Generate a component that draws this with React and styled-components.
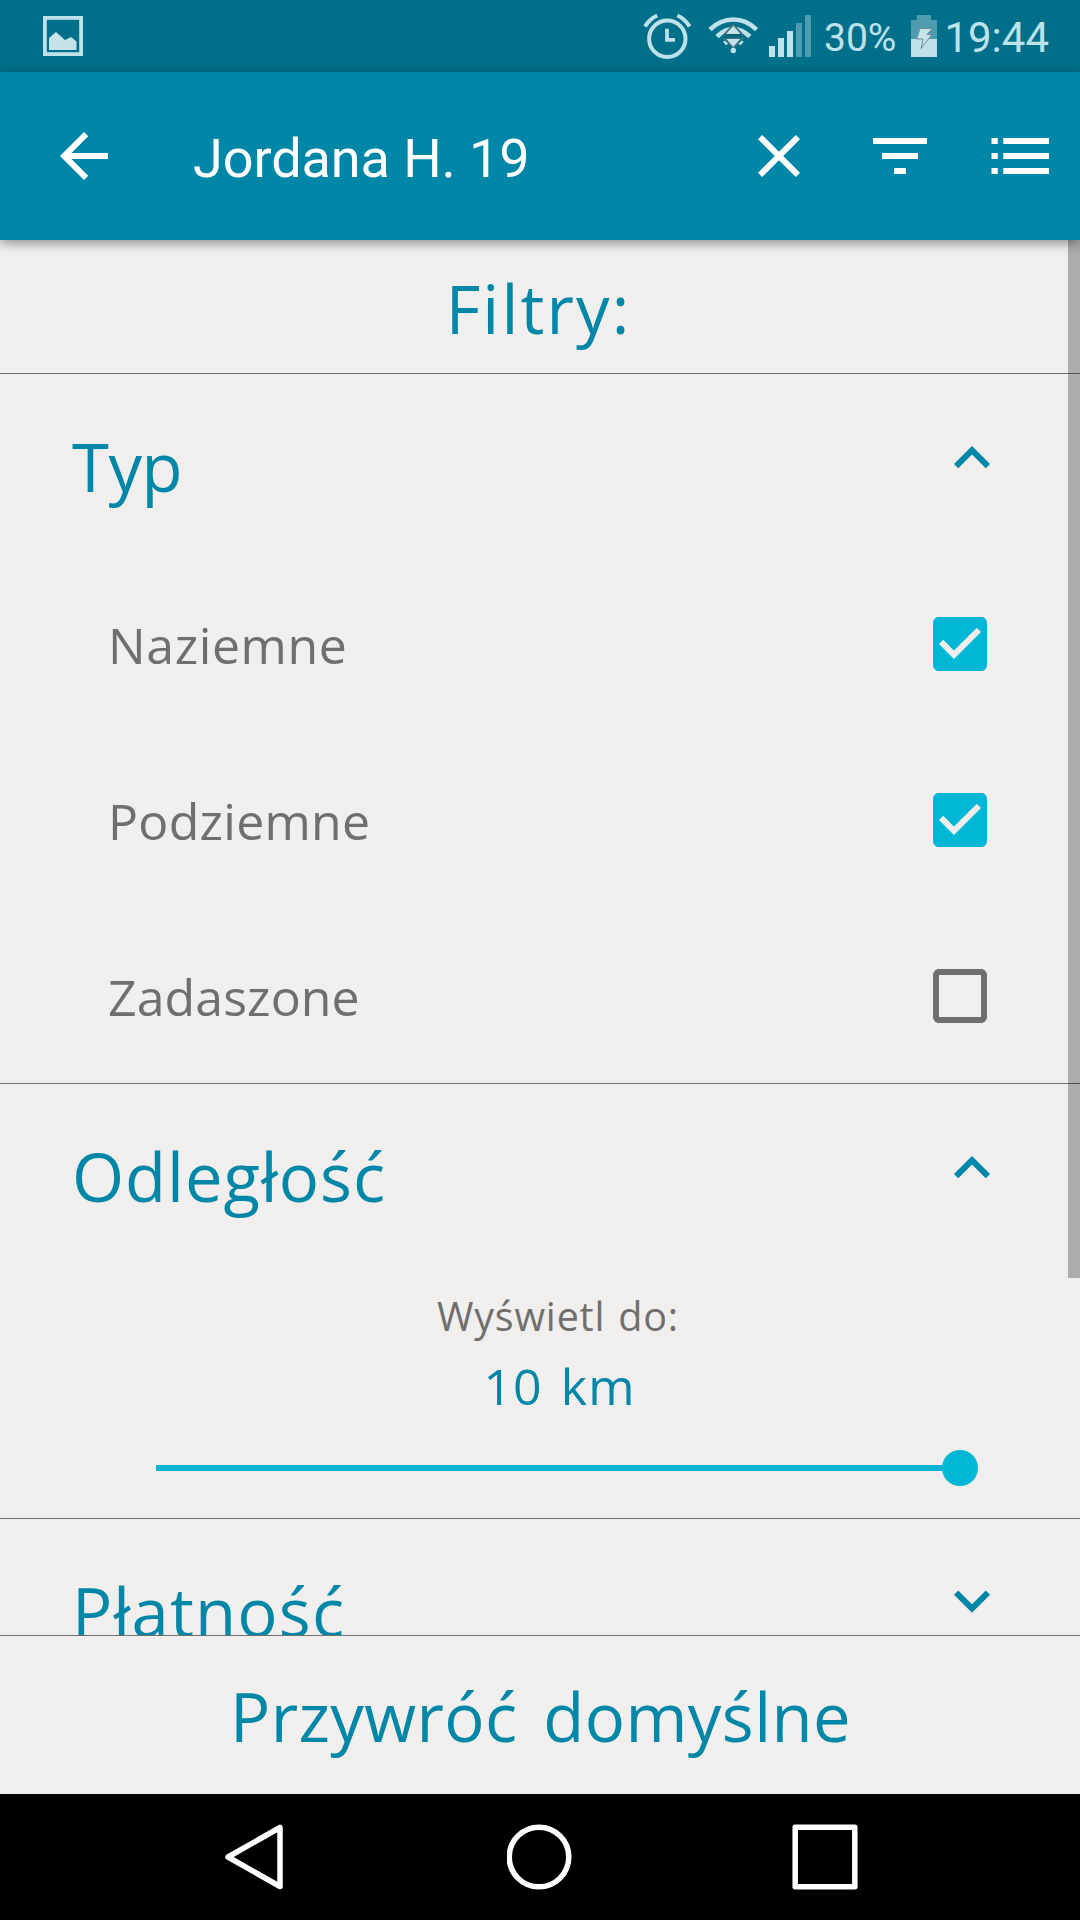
import React, { useState } from 'react'
import styled, { createGlobalStyle } from 'styled-components'

const GlobalStyle = createGlobalStyle`
    :root{
        --primary: #0086a6;
        --primaryDark: #00708a;
        --accent: #00b8d6;
        --text: #706f6d;
        --bg: #f0efed;
        --status: #bfe1ea;
    }
    *{
        box-sizing: border-box;
    }
    body{
        margin: 0;
        background-color: var(--bg);
    }
    svg{
        display: block;
        flex: none;
    }
`

const Screen = styled.div`
    width: 1080px;
    height: 1920px;
    display: flex;
    flex-direction: column;
    overflow: hidden;
    background-color: var(--bg);
    font-family: 'Open Sans', 'Noto Sans', sans-serif;
    white-space: nowrap;
`

const StatusBar = styled.div`
    flex: none;
    height: 72px;
    padding: 0 31px 0 43px;
    display: flex;
    align-items: center;
    background-color: var(--primaryDark);
    color: var(--status);
    font-family: Roboto, sans-serif;
`

const StatusIcons = styled.div`
    margin-left: auto;
    display: flex;
    align-items: center;
    .wifi{
        margin: 0 11px 0 17px;
    }
    .battery{
        margin: 0 7px 0 15px;
    }
`

const StatusText = styled.span`
    font-size: ${props => props.$size}px;
    line-height: 48px;
    padding-top: 3px;
`

const Percent = styled(StatusText)`
    margin-left: 13px;
`

const AppBar = styled.header`
    flex: none;
    height: 168px;
    padding: 0 31px 0 48px;
    display: flex;
    align-items: center;
    background-color: var(--primary);
    color: white;
    box-shadow: 0 3px 11px rgba(0,0,0, .42);
    z-index: 1;
`

const Title = styled.h1`
    flex: 1;
    margin: 0 0 0 73px;
    padding-top: 5px;
    font: 400 54px/64px Roboto, sans-serif;
    letter-spacing: -.08px;
`

const Actions = styled.div`
    display: flex;
    align-items: center;
    .filter{
        margin: 0 64px 0 73px;
    }
`

const Scroll = styled.main`
    flex: 1;
    min-height: 0;
    overflow: hidden;
    position: relative;
`

const ScrollThumb = styled.div`
    position: absolute;
    top: 0;
    right: 0;
    width: 12px;
    height: 1038px;
    background-color: rgba(0,0,0, .28);
`

const Heading = styled.h2`
    margin: 0;
    height: 134px;
    padding: 3px 3px 0 0;
    display: flex;
    align-items: center;
    justify-content: center;
    border-bottom: 1px solid var(--text);
    color: var(--primary);
    font-size: 67px;
    font-weight: 400;
    letter-spacing: 2.13px;
`

const SectionStyled = styled.section`
    border-bottom: 1px solid var(--text);
`

const SectionHead = styled.div`
    height: 182px;
    padding: 0 72px;
    display: flex;
    align-items: center;
    justify-content: space-between;
    color: var(--primary);
    svg{
        margin-bottom: 14px;
    }
`

const SectionTitle = styled.h3`
    margin: 0;
    padding-top: 2px;
    font-size: 67px;
    font-weight: 400;
    letter-spacing: ${props => props.$spacing}px;
`

const Row = styled.label`
    height: ${props => props.$last ? 175 : 176}px;
    padding: 0 84px 0 108px;
    display: flex;
    align-items: center;
    justify-content: space-between;
    color: var(--text);
    font-size: 50px;
    letter-spacing: ${props => props.$spacing}px;
    span{
        padding-top: 2px;
    }
`

const Distance = styled.div`
    height: 252px;
    padding: 25px 120px 0 156px;
    display: flex;
    flex-direction: column;
`

const DistanceLabel = styled.span`
    text-align: center;
    color: var(--text);
    font-size: 39.5px;
    line-height: 50px;
    letter-spacing: .8px;
    word-spacing: 2px;
`

const DistanceValue = styled.span`
    margin-top: 10px;
    padding-left: 3px;
    text-align: center;
    color: var(--primary);
    font-size: 50px;
    line-height: 70px;
    letter-spacing: 1.1px;
    word-spacing: 4px;
`

const Slider = styled.div`
    margin: 29px -18px 0 0;
    height: 36px;
    display: flex;
    align-items: center;
`

const Track = styled.div`
    flex: 1;
    height: 6px;
    margin-right: -4px;
    background-color: #0cb3d1;
`

const Thumb = styled.div`
    width: 36px;
    height: 36px;
    border-radius: 50%;
    background-color: var(--accent);
`

const Footer = styled.footer`
    flex: none;
    height: 159px;
    padding: 2px 0 0 1px;
    display: flex;
    align-items: center;
    justify-content: center;
    border-top: 1px solid var(--text);
    color: var(--primary);
    font-size: 67px;
    letter-spacing: .4px;
    word-spacing: 8px;
`

const NavBar = styled.nav`
    flex: none;
    height: 126px;
    padding: 0 222px 0 221px;
    display: flex;
    align-items: center;
    justify-content: space-between;
    background-color: black;
`

const Icon = ({ d, color = 'currentColor' }) => (
    <svg width="72" height="72" viewBox="0 0 24 24" fill={color}>
        <path d={d} />
    </svg>
)

const BACK = 'M20 11H7.83l5.59-5.59L12 4l-8 8 8 8 1.41-1.41L7.83 13H20v-2z'
const UP = 'M12 8l-6 6 1.41 1.41L12 10.83l4.59 4.58L18 14z'
const DOWN = 'M7.41 7.84L12 12.42l4.59-4.58L18 9.25l-6 6-6-6z'
const CHECKED = 'M19 3H5c-1.11 0-2 .9-2 2v14c0 1.1.89 2 2 2h14c1.11 0 2-.9 2-2V5c0-1.1-.89-2-2-2zm-9 14l-5-5 1.41-1.41L10 14.17l7.59-7.59L19 8l-9 9z'
const UNCHECKED = 'M19 5v14H5V5h14m0-2H5c-1.1 0-2 .9-2 2v14c0 1.1.9 2 2 2h14c1.1 0 2-.9 2-2V5c0-1.1-.9-2-2-2z'

const PictureIcon = () => (
    <svg width="40" height="40" viewBox="0 0 40 40">
        <rect x="1.9" y="1.9" width="36.2" height="36.2" fill="none" stroke="currentColor" strokeWidth="3.8" />
        <path d="M6 22l7-6 9 8 6-3 5.5 4.5V34H6z" fill="#c8e2e9" />
    </svg>
)

const AlarmIcon = () => (
    <svg width="48" height="46" viewBox="0 0 48 46" fill="none" stroke="currentColor" strokeWidth="4">
        <circle cx="24.3" cy="25.7" r="18.2" />
        <path d="M24 15.7v11.2h8" strokeWidth="3.7" />
        <path d="M2 13.5Q6.5 6 14.2 2.5M46.600 13.5Q42.100 6 34.4 2.5" />
    </svg>
)

const WifiIcon = () => (
    <svg className="wifi" width="50" height="40" viewBox="0 0 50 40" fill="none">
        <path d="M2 13.5Q12.5 3.5 25.3 3.5T48.6 13.5M9 20.5Q16.5 13 25.3 13T41.8 20.5M16.5 27.5Q25 20.5 34.2 27.5" stroke="currentColor" strokeWidth="4.6" />
        <path d="M25.3 7.5L15 18.8l-1 1.5h22.6l-1-1.5zM14 21.8h22.6L25.3 33z" fill="var(--primaryDark)" />
        <path d="M25.3 9.7L18 18h14.6zM18 22.5h14.6L25.3 31z" fill="#c8e2e9" />
        <path d="M15.5 18.8L25.3 8.7l9.8 10.1M15.5 21.8l9.8 10.2 9.8-10.2" stroke="#56757f" strokeWidth="1.2" />
        <path d="M17.5 18.8h15.6M17.5 22h15.6" stroke="#14505f" strokeWidth="1.2" />
        <circle cx="25.3" cy="34.5" r="2.7" fill="currentColor" />
    </svg>
)

const SignalIcon = () => (
    <svg width="42" height="42" viewBox="0 0 42 42" fill="currentColor">
        <path d="M0 31h6v11H0zM9 23h6v19H9zM18 16h6v26h-6z" />
        <path d="M27 8h6v34h-6zM36 0h6v42h-6z" fill="#4f9cb0" />
    </svg>
)

const BatteryIcon = () => (
    <svg className="battery" width="26" height="42" viewBox="0 0 26 42">
        <path d="M5.7 0H20v5h6v19H0V5h5.7z" fill="#4f9cb0" />
        <path d="M0 24h26v18H0z" fill="currentColor" />
        <path d="M9 13.5h12.5l-5.5 6h5L10 33.5l2-9.5H5.5z" fill="#c8e2e9" stroke="#6f8e98" strokeWidth="1" />
    </svg>
)

const CloseIcon = () => (
    <svg width="42" height="42" viewBox="0 0 42 42" stroke="currentColor" strokeWidth="6">
        <path d="M2.1 2.1l37.8 37.8M39.900 2.1L2.1 39.9" />
    </svg>
)

const FilterIcon = () => (
    <svg className="filter" width="54" height="36" viewBox="0 0 54 36" fill="currentColor">
        <path d="M0 0h54v6H0zM9 15h36v6H9zM21 30h12v6H21z" />
    </svg>
)

const ListIcon = () => (
    <svg width="58" height="36" viewBox="0 0 58 36" fill="currentColor">
        <path d="M.5 0h6.3v6H.5zM12.3 0H58v6H12.3zM.5 15h6.3v6H.5zM12.3 15H58v6H12.3zM.5 30h6.3v6H.5zM12.3 30H58v6H12.3z" />
    </svg>
)

const NavIcon = ({ children }) => (
    <svg width="66" height="66" viewBox="0 0 66 66" fill="none" stroke="white" strokeWidth="5.5" strokeLinejoin="round">
        {children}
    </svg>
)

const initialTypes = [
    { name: 'Naziemne', checked: true, spacing: .6 },
    { name: 'Podziemne', checked: true, spacing: .27 },
    { name: 'Zadaszone', checked: false, spacing: .1 },
]

function Section({ title, spacing, open, children }) {
    return (
        <SectionStyled>
            <SectionHead>
                <SectionTitle $spacing={spacing}>{title}</SectionTitle>
                <Icon d={open ? UP : DOWN} />
            </SectionHead>
            {open && children}
        </SectionStyled>
    )
}

export default function App() {
    const [types, setTypes] = useState(initialTypes)

    const toggle = name => setTypes(types.map(t => t.name === name ? { ...t, checked: !t.checked } : t))

    return (
        <Screen>
            <GlobalStyle />
            <StatusBar>
                <PictureIcon />
                <StatusIcons>
                    <AlarmIcon />
                    <WifiIcon />
                    <SignalIcon />
                    <Percent $size={39}>30%</Percent>
                    <BatteryIcon />
                    <StatusText $size={42}>19:44</StatusText>
                </StatusIcons>
            </StatusBar>
            <AppBar>
                <Icon d={BACK} />
                <Title>Jordana H. 19</Title>
                <Actions>
                    <CloseIcon />
                    <FilterIcon />
                    <ListIcon />
                </Actions>
            </AppBar>
            <Scroll>
                <Heading>Filtry:</Heading>
                <Section title="Typ" spacing={-.48} open>
                    {types.map((t, i) => (
                        <Row key={t.name} $spacing={t.spacing} $last={i === types.length - 1} onClick={() => toggle(t.name)}>
                            <span>{t.name}</span>
                            <Icon d={t.checked ? CHECKED : UNCHECKED} color={t.checked ? 'var(--accent)' : 'var(--text)'} />
                        </Row>
                    ))}
                </Section>
                <Section title="Odległość" spacing={.98} open>
                    <Distance>
                        <DistanceLabel>Wyświetl do:</DistanceLabel>
                        <DistanceValue>10 km</DistanceValue>
                        <Slider>
                            <Track />
                            <Thumb />
                        </Slider>
                    </Distance>
                </Section>
                <Section title="Płatność" spacing={1.19} />
                <ScrollThumb />
            </Scroll>
            <Footer>Przywróć domyślne</Footer>
            <NavBar>
                <NavIcon><path d="M59 3.5v59L7 33z" /></NavIcon>
                <NavIcon><circle cx="32" cy="33" r="29.8" /></NavIcon>
                <NavIcon><rect x="3.2" y="3.2" width="59.6" height="59.6" /></NavIcon>
            </NavBar>
        </Screen>
    )
}
